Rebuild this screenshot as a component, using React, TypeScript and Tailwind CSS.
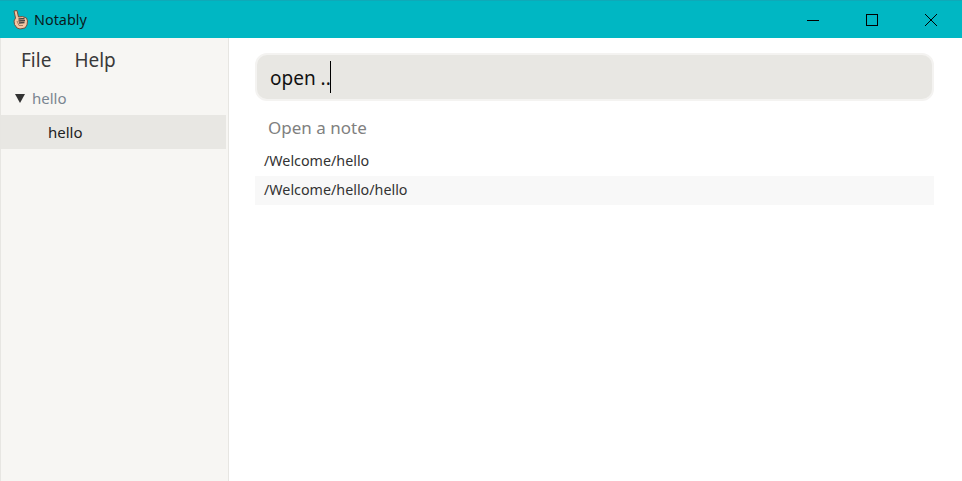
import React from 'react';

const font = "font-['Noto_Sans','Open_Sans',sans-serif]";

// pointing hand from the app logo
const HandIcon = () => (
  <svg width="16" height="20" viewBox="0 0 16 20" className="shrink-0">
    <path
      d="M2 1 L5 0.5 L6.5 7 L10.5 6.5 L14.5 8 L15.5 11 L15 15 L13 18 L8 19 L5 18 L2.5 14.5 L2 11 L3.5 8 Z"
      fill="#f5c6a2"
      stroke="#6f5040"
      strokeWidth="1"
    />
    <path d="M6.5 9 L12.5 8.5 M6.5 11 L13 10.5 M7 13 L12.5 12.5" stroke="#4a4644" strokeWidth="1.3" />
    <path d="M5 11 L7 15.5 L11 15.5" stroke="#a67c62" strokeWidth="1" fill="none" />
  </svg>
);

const App: React.FC = () => {
  return (
    <div className={`flex h-[481px] w-[962px] flex-col overflow-hidden bg-white ${font}`}>
      <div className="flex h-[38px] shrink-0 items-center border-t border-[#0fa9b8] bg-[#00b7c3] pl-[12px]">
        <HandIcon />
        <span className="ml-[6px] text-[14.4px] text-[#0a1a1c]">Notably</span>
        <div className="ml-auto flex items-center pr-[2px]">
          <div className="flex h-[37px] w-[59px] items-center justify-center">
            <svg width="12" height="12" viewBox="0 0 12 12">
              <path d="M0 6.5 H12" stroke="#000" strokeWidth="1" />
            </svg>
          </div>
          <div className="flex h-[37px] w-[59px] items-center justify-center">
            <svg width="12" height="12" viewBox="0 0 12 12">
              <rect x="0.5" y="0.5" width="11" height="11" fill="none" stroke="#000" strokeWidth="1" />
            </svg>
          </div>
          <div className="flex h-[37px] w-[59px] items-center justify-center">
            <svg width="12" height="12" viewBox="0 0 12 12">
              <path d="M0 0 L12 12 M12 0 L0 12" stroke="#000" strokeWidth="1" />
            </svg>
          </div>
        </div>
      </div>
      <div className="flex min-h-0 flex-1">
        <div className="flex w-[229px] shrink-0 flex-col border-x border-[#e7e6e2] bg-[#f7f6f3] pr-[2px]">
          <div className="flex h-[44px] items-center gap-[23px] pl-[20px] text-[19px] text-[#3a3a3a]">
            <span>File</span>
            <span>Help</span>
          </div>
          <div className="flex h-[33px] items-center pl-[14px] text-[15px] text-[#7a8590]">
            <span className="h-0 w-0 border-x-[5.5px] border-t-[9px] border-x-transparent border-t-[#333]" />
            <span className="ml-[7px]">hello</span>
          </div>
          <div className="flex h-[34px] items-center bg-[#e8e7e3] pl-[47px] text-[15px] text-[#222]">hello</div>
        </div>
        <div className="flex min-w-0 flex-1 flex-col pl-[26px] pr-[28px] pt-[15px]">
          <div className="flex h-[48px] items-center rounded-[12px] border-2 border-[#f4f3f1] bg-[#e8e7e3] pl-[13px] text-[19px] text-[#111]">
            <span className="translate-y-[1px]">open ..</span>
            <span className="-ml-[1px] h-[32px] w-[1px] bg-black" />
          </div>
          <div className="mt-[15px] pl-[13px] text-[17px] leading-[24px] text-[#808080]">Open a note</div>
          <div className="mt-[7px] flex h-[29px] items-center pb-[2px] pl-[9px] text-[14.3px] text-[#333]">/Welcome/hello</div>
          <div className="flex h-[29px] items-center bg-[#f8f8f8] pb-[2px] pl-[9px] text-[14.3px] text-[#333]">/Welcome/hello/hello</div>
        </div>
      </div>
    </div>
  );
};

export default App;
